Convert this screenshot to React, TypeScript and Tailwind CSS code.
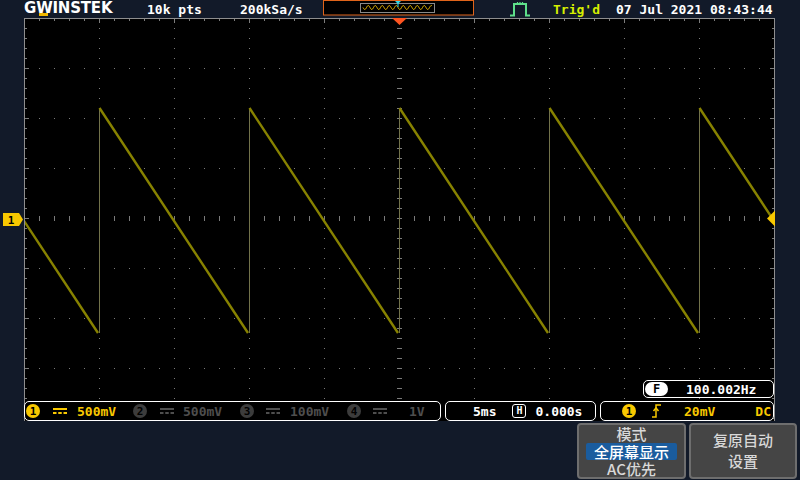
import React from "react";

const YEL = "#f8c800";

function Graticule() {
  const g: React.ReactNode[] = [];
  // grid dots on division lines
  for (let j = 1; j < 8; j++) {
    if (j === 4) continue;
    const y = 18 + 50 * j;
    for (let k = 1; k < 50; k++) g.push(<rect key={`h${j}-${k}`} x={24 + 15 * k} y={y} width={1} height={1} />);
  }
  for (let i = 1; i < 10; i++) {
    if (i === 5) continue;
    const x = 24 + 75 * i;
    for (let k = 1; k < 40; k++) g.push(<rect key={`v${i}-${k}`} x={x} y={18 + 10 * k} width={1} height={1} />);
  }
  // centre cross
  for (let k = 1; k < 50; k++) g.push(<rect key={`ch${k}`} x={24 + 15 * k} y={216} width={1} height={5} />);
  for (let k = 1; k < 40; k++) g.push(<rect key={`cv${k}`} x={397} y={18 + 10 * k} width={5} height={1} />);
  // frame ticks
  for (let k = 0; k <= 50; k++) g.push(<rect key={`t${k}`} x={24 + 15 * k} y={19} width={1} height={k % 5 === 0 ? 4 : 2} />);
  for (let k = 0; k <= 40; k++) {
    const w = k % 5 === 0 ? 4 : 2;
    g.push(<rect key={`l${k}`} x={25} y={18 + 10 * k} width={w} height={1} />);
    g.push(<rect key={`r${k}`} x={774 - w} y={18 + 10 * k} width={w} height={1} />);
  }

  const ramps: string[] = [];
  for (let k = -1; k < 5; k++) {
    const e = 99.5 + 150 * k;
    ramps.push(`M${e},108 L${e + 148.5},333`);
  }
  const edges = [99.5, 249.5, 399.5, 549.5, 699.5].map((x) => `M${x},333 V108`).join(" ");

  return (
    <svg width={752} height={403} viewBox="24 18 752 403" className="block shrink-0">
      <defs>
        <clipPath id="scr">
          <rect x={25} y={19} width={749} height={402} />
        </clipPath>
      </defs>
      <rect x={24} y={18} width={751} height={403} fill="#000" />
      <g fill="#7c7c7c">{g}</g>
      <rect x={24} y={18} width={751} height={1} fill="#8e8e8e" />
      <rect x={24} y={18} width={1} height={403} fill="#8e8e8e" />
      <rect x={774} y={18} width={1} height={403} fill="#8e8e8e" />
      <g clipPath="url(#scr)">
        <path d={edges} stroke="#72724a" strokeWidth={1} fill="none" />
        <path d={ramps.join(" ")} stroke="#878200" strokeWidth={2.4} fill="none" />
      </g>
    </svg>
  );
}

function Overview() {
  let d = "M40,7.5";
  for (let x = 40; x <= 109; x += 0.5) d += ` L${x},${7.5 + 2 * Math.sin(((x - 40) / 7) * Math.PI * 2)}`;
  return (
    <svg width={151} height={16} className="block">
      <rect x={0.5} y={0.5} width={150} height={14.5} fill="#000" stroke="#e0641a" />
      <rect x={37.5} y={3.5} width={74} height={9} fill="none" stroke="#8a8a8a" />
      <path d={d} stroke="#e8b800" strokeWidth={1} fill="none" />
      <path d="M72,1 H78 L75,4 Z" fill="#30d8e8" />
      <rect x={74.5} y={3} width={1} height={4} fill="#30d8e8" />
    </svg>
  );
}

function TrigIcon() {
  return (
    <svg width={22} height={16} className="block">
      <path d="M1,14.5 H5 V3 H17 V14.5 H21" stroke="#5ee08a" strokeWidth={2} fill="none" />
      <path d="M8.5,1 V3 M11,1 V3 M13.5,1 V3" stroke="#5ee08a" strokeWidth={1.2} />
    </svg>
  );
}

function Circ({ n, on }: { n: number; on: boolean }) {
  return (
    <div
      className={`w-[14px] h-[14px] shrink-0 rounded-full flex items-center justify-center text-[11px] leading-none font-bold text-black ${
        on ? "bg-[#f8c800]" : "bg-[#3c3c3c]"
      }`}
    >
      {n}
    </div>
  );
}

function DcSym({ c }: { c: string }) {
  return (
    <svg width={14} height={6} className="block shrink-0">
      <rect x={0} y={0} width={14} height={2} fill={c} />
      <rect x={0} y={4} width={3.5} height={2} fill={c} />
      <rect x={5.25} y={4} width={3.5} height={2} fill={c} />
      <rect x={10.5} y={4} width={3.5} height={2} fill={c} />
    </svg>
  );
}

function Chan({ n, on, value, dcMl, valMl }: { n: number; on: boolean; value: string; dcMl: string; valMl: string }) {
  const c = on ? YEL : "#4e4e4e";
  return (
    <div className="flex items-center w-[107px] shrink-0">
      <Circ n={n} on={on} />
      <div className={dcMl}>
        <DcSym c={c} />
      </div>
      <span className={`${valMl} ${on ? "text-[#f8c800]" : "text-[#4e4e4e]"}`}>{value}</span>
    </div>
  );
}

export default function App() {
  return (
    <div className="relative w-[800px] h-[480px] overflow-hidden bg-[#121a29] font-['DejaVu_Sans_Mono',monospace] font-bold text-[13px] leading-none text-white">
      {/* top bar */}
      <div className="flex items-center h-[18px] pl-[24px]">
        <div className="w-[123px] shrink-0 pb-[2px]">
          <span className="font-['DejaVu_Sans',sans-serif] text-[15px] font-bold tracking-[-0.2px] text-white">
            G
            <span className="relative inline-block">
              W
              <span className="absolute left-[3px] right-[4px] bottom-[0px] h-[3px] bg-[#f0b800]" />
            </span>
            INSTEK
          </span>
        </div>
        <div className="w-[93px] shrink-0">10k pts</div>
        <div className="w-[83px] shrink-0">200kSa/s</div>
        <div className="w-[151px] shrink-0 self-start">
          <Overview />
        </div>
        <div className="w-[35px] shrink-0" />
        <div className="w-[22px] shrink-0">
          <TrigIcon />
        </div>
        <div className="w-[22px] shrink-0" />
        <div className="w-[63px] shrink-0 text-[#d6ee00]">Trig'd</div>
        <div className="shrink-0">07 Jul 2021 08:43:44</div>
      </div>

      {/* screen */}
      <div className="flex">
        <div className="w-[24px] shrink-0" />
        <Graticule />
      </div>

      {/* soft keys */}
      <div className="flex justify-end gap-[3px] pr-[3px] pt-[2px] font-['Noto_Sans_CJK_SC',sans-serif] font-medium text-[15px] text-[#d8d8d8]">
        <div className="w-[109px] h-[56px] rounded-[4px] border-2 border-[#6e6e6e] bg-[#454545] flex flex-col items-center">
          <div className="h-[17px] leading-[17px]">模式</div>
          <div className="h-[17px] leading-[17px] mt-[1px] px-[8px] bg-[#1a5c9e] rounded-[2px] text-white">全屏幕显示</div>
          <div className="h-[17px] leading-[17px]">AC优先</div>
        </div>
        <div className="w-[108px] h-[56px] rounded-[4px] border-2 border-[#6e6e6e] bg-[#454545] flex flex-col items-center pt-[4px]">
          <div className="leading-[21px]">复原自动</div>
          <div className="leading-[21px]">设置</div>
        </div>
      </div>

      {/* trigger position marker */}
      <svg width={16} height={8} className="absolute left-[392px] top-[18px]">
        <polygon points="0,0 15,0 7.5,7" fill="#ff5420" />
      </svg>

      {/* channel 1 ground marker */}
      <svg width={21} height={13} className="absolute left-[3px] top-[213px]">
        <polygon points="0,0 16,0 20,6.5 16,13 0,13" fill={YEL} />
        <text x={8} y={11} textAnchor="middle" fontSize={11} fontWeight="bold" fontFamily="DejaVu Sans Mono" fill="#000">
          1
        </text>
      </svg>

      {/* trigger level marker */}
      <svg width={10} height={17} className="absolute left-[766px] top-[210px]">
        <polygon points="1,8.5 9,0.5 9,16.5" fill={YEL} />
      </svg>

      {/* frequency box */}
      <div className="absolute left-[643px] top-[380px] w-[131px] h-[18px] rounded-[5px] border border-white bg-black flex items-center pl-[1px]">
        <div className="w-[23px] h-[14px] rounded-[7px] bg-white text-black flex items-center justify-center text-[12px]">F</div>
        <span className="ml-[18px]">100.002Hz</span>
      </div>

      {/* status bar */}
      <div className="absolute left-[24px] top-[401px] w-[417px] h-[20px] rounded-[5px] border border-white bg-black flex items-center pl-[1px]">
        <Chan n={1} on value="500mV" dcMl="ml-[13px]" valMl="ml-[10px]" />
        <Chan n={2} on={false} value="500mV" dcMl="ml-[13px]" valMl="ml-[9px]" />
        <Chan n={3} on={false} value="100mV" dcMl="ml-[12px]" valMl="ml-[10px]" />
        <Chan n={4} on={false} value="1V" dcMl="ml-[12px]" valMl="ml-[22px]" />
      </div>
      <div className="absolute left-[445px] top-[401px] w-[151px] h-[20px] rounded-[5px] border border-white bg-black flex items-center pl-[27px]">
        <span>5ms</span>
        <div className="ml-[16px] w-[14px] h-[14px] rounded-[3px] border-[1.5px] border-white flex items-center justify-center text-[10px]">H</div>
        <span className="ml-[9px]">0.000s</span>
      </div>
      <div className="absolute left-[600px] top-[401px] w-[174px] h-[20px] rounded-[5px] border border-white bg-black flex items-center pl-[21px] pr-[2px] text-[#f8c800]">
        <Circ n={1} on />
        <svg width={9} height={14} className="block ml-[16px]">
          <path d="M0,13 H4 V1 H9" stroke={YEL} strokeWidth={1.5} fill="none" />
          <path d="M1.5,7 L4,4 L6.5,7" stroke={YEL} strokeWidth={1.5} fill="none" />
        </svg>
        <span className="ml-[23px]">20mV</span>
        <span className="ml-auto">DC</span>
      </div>
    </div>
  );
}
